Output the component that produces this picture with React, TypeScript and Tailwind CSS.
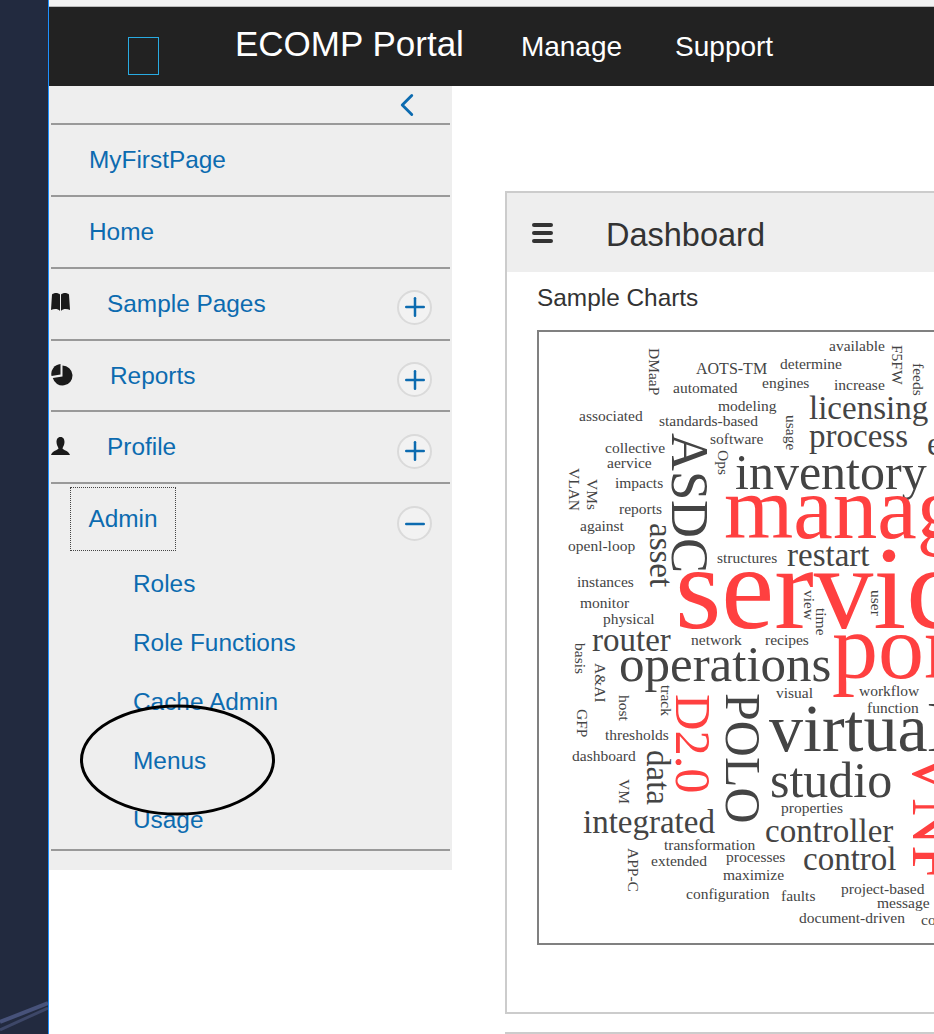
import { ReactNode } from "react";
import { ChevronLeft, Minus, Plus } from "lucide-react";

const S = 15.5;
const M = 33;
const L = 50;

// [word, x, y, size, rotated, red] in page coordinates
const words: [string, number, number, number, boolean?, boolean?][] = [
  ["available", 829, 351, S],
  ["AOTS-TM", 696, 374, 16],
  ["determine", 780, 369, S],
  ["engines", 762, 388, S],
  ["increase", 834, 390, S],
  ["automated", 673, 393, S],
  ["modeling", 718, 411, S],
  ["associated", 579, 421, S],
  ["standards-based", 659, 426, S],
  ["licensing", 809, 419, M],
  ["process", 809, 447, M],
  ["enterprise", 927, 455, M],
  ["software", 710, 444, S],
  ["collective", 605, 453, S],
  ["aervice", 607, 468, S],
  ["impacts", 615, 488, S],
  ["reports", 619, 514, S],
  ["against", 580, 531, S],
  ["openl-loop", 568, 551, S],
  ["structures", 717, 563, S],
  ["restart", 787, 566, M],
  ["inventory", 735, 489, L],
  ["management", 724, 538, 89, false, true],
  ["service", 675, 628, 119, false, true],
  ["instances", 577, 587, S],
  ["monitor", 580, 608, S],
  ["physical", 603, 624, S],
  ["router", 592, 651, M],
  ["network", 691, 645, S],
  ["recipes", 765, 645, S],
  ["operations", 619, 681, 51],
  ["portal", 832, 678, 92, false, true],
  ["workflow", 859, 696, S],
  ["function", 867, 713, S],
  ["visual", 776, 698, S],
  ["thresholds", 605, 740, S],
  ["dashboard", 572, 761, S],
  ["virtual", 769, 751, 68],
  ["studio", 770, 797, L],
  ["properties", 781, 813, S],
  ["integrated", 583, 833, M],
  ["controller", 765, 842, M],
  ["control", 803, 870, M],
  ["transformation", 664, 850, S],
  ["extended", 651, 866, S],
  ["processes", 726, 862, S],
  ["maximize", 723, 880, S],
  ["configuration", 686, 899, S],
  ["faults", 781, 901, S],
  ["project-based", 841, 894, S],
  ["message", 877, 908, S],
  ["document-driven", 799, 923, S],
  ["core", 921, 925, S],
  ["DMaaP", 649, 348, S, true],
  ["F5FW", 892, 345, S, true],
  ["feeds", 913, 363, S, true],
  ["usage", 786, 415, S, true],
  ["Ops", 718, 450, S, true],
  ["VLAN", 569, 468, S, true],
  ["VMs", 587, 479, S, true],
  ["ASDC", 672, 433, 52.500, true],
  ["asset", 650, 523, M, true],
  ["view", 804, 590, S, true],
  ["time", 816, 608, S, true],
  ["user", 871, 590, S, true],
  ["basis", 575, 643, S, true],
  ["A&AI", 595, 663, S, true],
  ["track", 661, 685, S, true],
  ["host", 619, 695, S, true],
  ["GFP", 577, 709, S, true],
  ["D2.0", 676, 694, 50.500, true, true],
  ["POLO", 726, 693, L, true],
  ["data", 647, 750, M, true],
  ["VM", 619, 779, S, true],
  ["APP-C", 628, 848, S, true],
  ["VNF", 913, 750, 66, true, true],
];

function BookIcon() {
  return (
    <svg width="19" height="18" viewBox="0 0 19 18" fill="#1a1a1a" className="mb-[4px]">
      <path d="M1 1.500C3 -0.500 7 -0.500 9 1.500V18C7 15.500 3 15.500 0 17Z" />
      <path d="M18 1.500C16 -0.500 12 -0.500 10 1.500V18C12 15.500 16 15.500 19 17Z" />
    </svg>
  );
}

function PieIcon() {
  return (
    <svg width="22" height="22" viewBox="0 0 22 22" fill="#1a1a1a">
      <path d="M11.500 1.500A10 10 0 1 1 1.800 14L11.500 12.500Z" />
      <path d="M9.500 0V10.500L0.500 12A10 10 0 0 1 9.500 0Z" />
    </svg>
  );
}

function UserIcon() {
  return (
    <svg width="19" height="18" viewBox="0 0 19 18" fill="#1a1a1a" className="mb-[2px]">
      <path d="M9.500 0C12.500 0 13.500 2.500 13.500 5C13.500 8 12 9.500 11.500 11.500C12 13 18 14 19 18H0C1 14 7 13 7.500 11.500C7 9.500 5.500 8 5.500 5C5.500 2.500 6.500 0 9.500 0Z" />
    </svg>
  );
}

function RoundButton({ open, className = "mt-[6px]" }: { open?: boolean; className?: string }) {
  return (
    <div
      className={`flex h-[35px] w-[35px] items-center justify-center rounded-full border-2 border-[#dadada] bg-[#f2f2f2] text-[#0c6bb0] ${className}`}
    >
      {open ? <Minus size={30} strokeWidth={2} /> : <Plus size={30} strokeWidth={2} />}
    </div>
  );
}

function MenuRow({
  label,
  icon,
  iconWidth,
  height,
  buttonClass,
  textClass = "",
}: {
  label: string;
  icon: ReactNode;
  iconWidth: string;
  height: string;
  buttonClass?: string;
  textClass?: string;
}) {
  return (
    <div className={`flex items-center justify-between border-b-2 border-[#999] pr-[18px] ${height}`}>
      <div className="flex items-center">
        <div className={`flex ${iconWidth}`}>{icon}</div>
        <span className={`text-[24.400px] text-[#0c6bb0] ${textClass}`}>{label}</span>
      </div>
      <RoundButton className={buttonClass} />
    </div>
  );
}

function Sidebar() {
  return (
    <aside className="h-[784px] w-[403px] shrink-0 bg-[#eeeeee] px-[2px]">
      <div className="flex h-[39px] items-start justify-end border-b-2 border-[#999] pr-[24px] text-[#0c6bb0]">
        <ChevronLeft size={38} strokeWidth={1.800} />
      </div>
      {["MyFirstPage", "Home"].map((label) => (
        <div key={label} className="flex h-[72px] items-center border-b-2 border-[#999] pl-[38px]">
          <span className="text-[24.400px] text-[#0c6bb0]">{label}</span>
        </div>
      ))}
      <MenuRow label="Sample Pages" icon={<BookIcon />} iconWidth="w-[56px]" height="h-[72px]" />
      <MenuRow
        label="Reports"
        icon={<PieIcon />}
        iconWidth="w-[59px]"
        height="h-[71px]"
        buttonClass="mt-[8px]"
        textClass="mt-[2px]"
      />
      <MenuRow
        label="Profile"
        icon={<UserIcon />}
        iconWidth="w-[56px]"
        height="h-[72px]"
        buttonClass="mt-[8px]"
      />
      <div className="border-b-2 border-[#999]">
        <div className="flex items-start justify-between pr-[18px] pt-[3px]">
          <div className="ml-[19px] flex h-[64px] w-[106px] items-center justify-center border border-dotted border-[#444] text-[24.400px] text-[#0c6bb0]">
            Admin
          </div>
          <RoundButton open className="mt-[19px]" />
        </div>
        <div className="h-[298px] pl-[82px] pt-[4px]">
          {["Roles", "Role Functions", "Cache Admin", "Menus", "Usage"].map((label) => (
            <div key={label} className="flex h-[59px] items-center text-[24.400px] text-[#0c6bb0]">
              {label}
            </div>
          ))}
        </div>
      </div>
    </aside>
  );
}

function WordCloud() {
  return (
    <svg width="395" height="611" viewBox="539 332 395 611" className="block font-['Liberation_Serif',serif]">
      {words.map(([word, x, y, size, rotated, red]) => (
        <text
          key={word}
          x={x}
          y={y}
          fontSize={size}
          fill={red ? "#ff4040" : "#444444"}
          transform={rotated ? `rotate(90 ${x} ${y})` : undefined}
        >
          {word}
        </text>
      ))}
    </svg>
  );
}

function DashboardPanel() {
  return (
    <div className="ml-[53px] mt-[105px] w-[1000px] shrink-0">
      <section className="h-[823px] border-2 border-[#cccccc]">
        <div className="flex h-[79px] items-center bg-[#eeeeee] pl-[25px]">
          <div className="flex w-[74px] flex-col gap-[4px]">
            <span className="h-[4px] w-[21px] rounded-sm bg-[#333]" />
            <span className="h-[4px] w-[21px] rounded-sm bg-[#333]" />
            <span className="h-[4px] w-[21px] rounded-sm bg-[#333]" />
          </div>
          <h1 className="mt-[5px] text-[32.500px] text-[#333]">Dashboard</h1>
        </div>
        <div className="pl-[30px]">
          <div className="flex h-[52px] items-center text-[24.400px] text-[#333]">Sample Charts</div>
          <div className="mt-[6px] h-[615px] w-[900px] border-2 border-[#808080]">
            <WordCloud />
          </div>
        </div>
      </section>
      <div className="mt-[18px] h-[40px] border-2 border-[#cccccc]" />
    </div>
  );
}

export default function App() {
  return (
    <div className="relative flex h-[1034px] w-[934px] overflow-hidden bg-white font-['Liberation_Sans',Arial,sans-serif]">
      {/* Left backdrop strip */}
      <div className="h-full w-[49px] shrink-0 border-r border-[#1e90ff] bg-[#222a3f]">
        <svg width="48" height="1034" viewBox="0 0 48 1034" className="block">
          <path d="M0 1022L48 1003" stroke="#47527a" strokeWidth="4" />
          <path d="M0 1030L48 1008" stroke="#3d4768" strokeWidth="3" />
        </svg>
      </div>

      <div className="min-w-0 flex-1">
        <div className="h-[7px] border-b border-[#bbbbbb] bg-[#f2f2f2]" />
        <header className="flex h-[79px] items-start bg-[#222222] text-white">
          <div className="ml-[79px] mt-[30px] h-[38px] w-[31px] border border-[#29abe2]" />
          <div className="ml-[76px] mt-[16px] text-[35px] leading-[42px]">ECOMP Portal</div>
          <div className="ml-[57px] mt-[23px] text-[28px] leading-[34px]">Manage</div>
          <div className="ml-[53px] mt-[23px] text-[28px] leading-[34px]">Support</div>
        </header>
        <div className="flex">
          <Sidebar />
          <DashboardPanel />
        </div>
      </div>

      {/* Hand-drawn annotation over the menu */}
      <svg width="200" height="116" viewBox="0 0 200 116" className="absolute left-[78px] top-[702px]">
        <ellipse cx="99.500" cy="58" rx="96" ry="54" fill="none" stroke="#000" strokeWidth="3" />
      </svg>
    </div>
  );
}
